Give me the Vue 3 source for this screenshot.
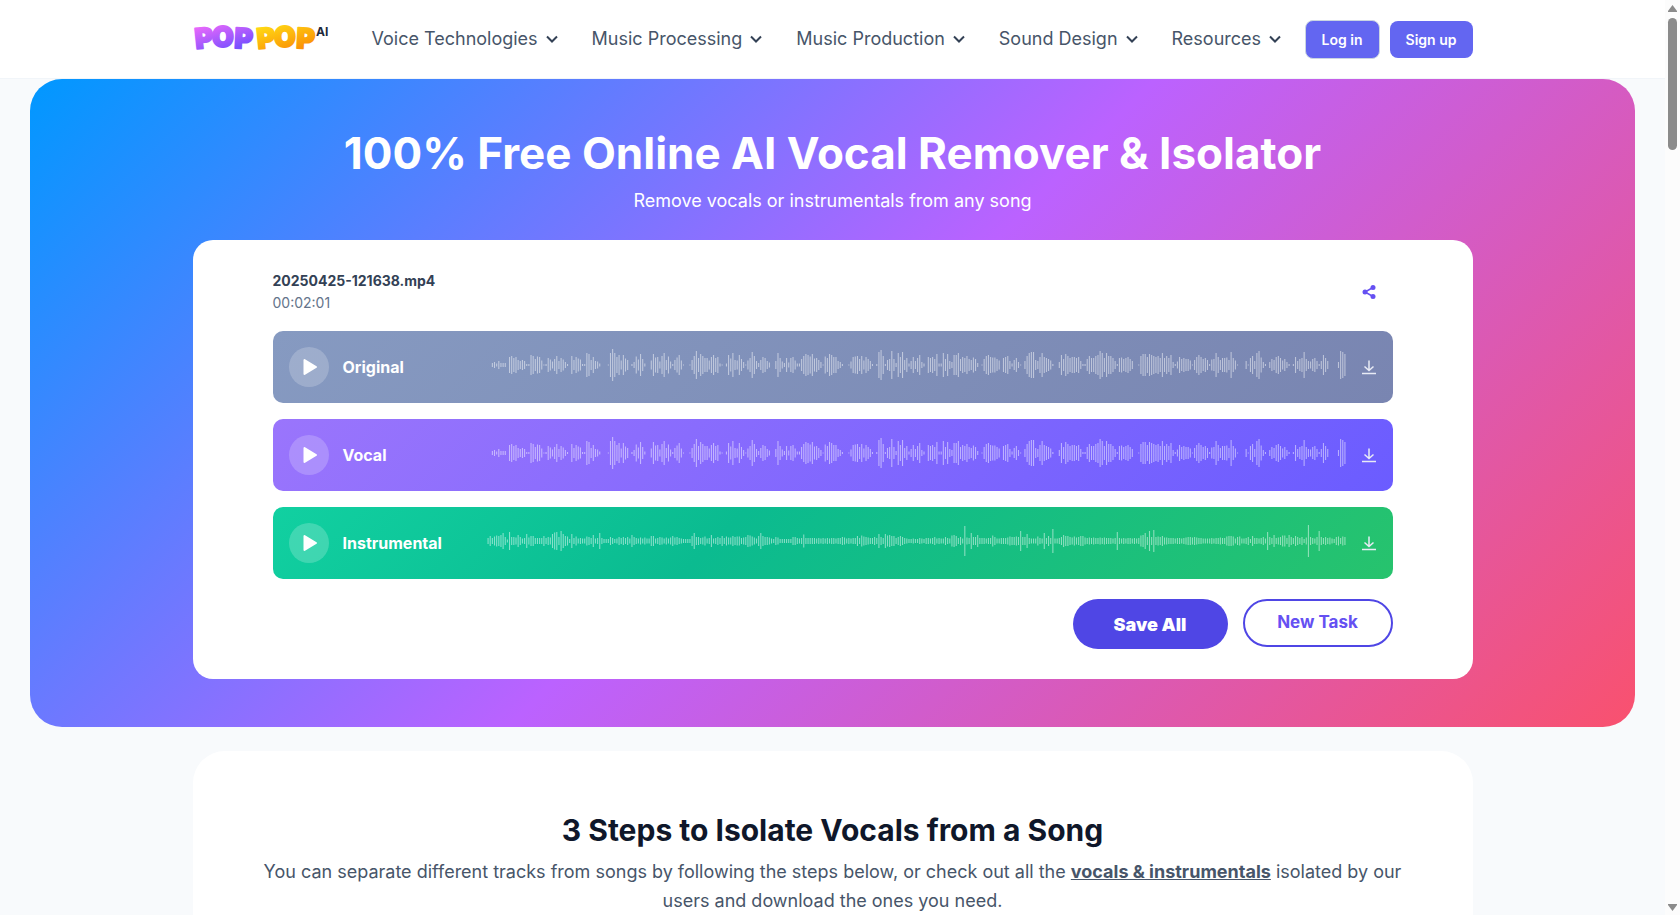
<script setup>
import { ref } from 'vue';

const menus = ref(['Voice Technologies', 'Music Processing', 'Music Production', 'Sound Design', 'Resources']);

// peak heights, one per bar
const vocalPeaks = [
  0, 0, 4, 6, 3, 8, 4, 4, 4, 0, 16, 18, 14, 16, 10, 8, 10, 8, 2, 2,
  20, 18, 12, 17, 16, 9, 1, 2, 14, 11, 7, 12, 18, 8, 14, 11, 6, 2, 0, 18,
  10, 16, 13, 11, 2, 2, 24, 22, 10, 16, 8, 7, 3, 0, 0, 0, 1, 24, 32, 24,
  16, 20, 9, 20, 13, 10, 0, 2, 6, 17, 11, 22, 12, 3, 0, 0, 9, 22, 15, 16,
  7, 18, 24, 10, 17, 7, 2, 10, 15, 20, 9, 1, 0, 0, 1, 10, 18, 28, 14, 22,
  18, 14, 14, 9, 16, 20, 14, 16, 3, 1, 0, 3, 20, 13, 24, 10, 9, 20, 12, 6,
  1, 9, 14, 26, 18, 8, 4, 10, 16, 14, 8, 5, 0, 0, 8, 24, 14, 7, 4, 14,
  5, 14, 16, 9, 3, 3, 12, 18, 22, 20, 17, 22, 13, 14, 10, 6, 1, 17, 14, 22,
  20, 16, 16, 8, 6, 2, 0, 0, 1, 7, 16, 17, 18, 12, 18, 9, 16, 12, 8, 2,
  0, 2, 26, 30, 18, 2, 10, 12, 28, 12, 4, 24, 16, 26, 10, 14, 3, 8, 16, 8,
  14, 20, 6, 3, 0, 16, 14, 16, 12, 22, 3, 3, 24, 12, 22, 8, 6, 20,
  20, 24, 12, 16, 14, 18, 12, 10, 15, 12, 4, 0, 1, 12, 18, 20, 16, 15, 15, 12,
  9, 0, 14, 16, 18, 8, 3, 10, 14, 6, 1, 0, 8, 18, 24, 26, 26, 10, 8, 16,
  24, 16, 14, 12, 9, 2, 0, 0, 6, 20, 12, 22, 18, 14, 16, 16, 14, 16, 8, 2,
  2, 12, 18, 14, 14, 18, 20, 28, 24, 14, 24, 18, 18, 14, 8, 2, 14, 15, 12, 14,
  16, 12, 8, 0, 0, 1, 18, 22, 22, 16, 22, 20, 18, 16, 18, 14, 24, 14, 18, 14,
  20, 6, 2, 7, 16, 12, 14, 12, 12, 9, 1, 10, 16, 20, 16, 12, 14, 10, 2, 11,
  12, 24, 16, 10, 14, 14, 15, 10, 26, 14, 9, 1, 0, 0, 0, 8, 1, 14, 18, 8,
  24, 28, 15, 6, 2, 0, 6, 12, 10, 16, 18, 14, 9, 12, 6, 2, 0, 2, 16, 8,
  12, 14, 26, 12, 8, 7, 12, 14, 8, 2, 8, 20, 14, 8, 0, 0, 0, 0, 6, 28, 26, 22,
];

const instrumentalPeaks = [
  6, 10, 6, 9, 11, 10, 12, 16, 8, 3, 18, 8, 8, 7, 12, 8, 5, 6, 14, 7,
  10, 10, 6, 6, 6, 6, 10, 6, 8, 7, 14, 17, 18, 8, 20, 14, 10, 9, 4, 14,
  6, 9, 5, 6, 5, 5, 9, 8, 6, 12, 5, 6, 16, 6, 4, 4, 4, 8, 6, 4,
  5, 8, 6, 8, 6, 8, 5, 12, 8, 6, 5, 7, 5, 7, 5, 5, 10, 10, 5, 6,
  8, 7, 5, 7, 5, 7, 10, 7, 8, 6, 5, 4, 4, 4, 4, 10, 16, 8, 8, 6,
  7, 9, 5, 6, 12, 5, 6, 8, 6, 10, 6, 9, 7, 7, 10, 8, 9, 9, 6, 7,
  8, 12, 11, 9, 7, 5, 10, 16, 10, 8, 8, 7, 5, 4, 8, 7, 4, 4, 4, 4,
  4, 4, 8, 8, 6, 5, 6, 13, 6, 6, 6, 6, 6, 5, 6, 5, 6, 5, 6, 5,
  6, 6, 5, 6, 6, 8, 7, 5, 6, 5, 6, 6, 10, 6, 11, 9, 8, 7, 6, 6,
  8, 6, 14, 8, 6, 14, 11, 12, 10, 10, 6, 8, 10, 8, 6, 5, 4, 4, 5, 4,
  4, 6, 5, 4, 6, 6, 5, 6, 8, 5, 6, 5, 5, 8, 6, 5, 11,
  12, 10, 6, 8, 5, 30, 7, 6, 16, 8, 8, 12, 6, 6, 6, 5, 6, 6, 11, 8,
  5, 5, 6, 6, 6, 7, 9, 8, 8, 9, 8, 20, 8, 8, 14, 6, 5, 5, 5, 9,
  6, 5, 16, 6, 10, 6, 24, 5, 5, 6, 8, 12, 10, 10, 8, 7, 9, 7, 8, 10,
  10, 7, 6, 7, 6, 7, 6, 6, 7, 6, 7, 6, 6, 6, 5, 6, 18, 6, 5, 6,
  5, 6, 6, 5, 6, 5, 6, 11, 12, 16, 8, 20, 8, 22, 8, 9, 8, 10, 7, 7,
  6, 6, 6, 5, 6, 6, 5, 6, 7, 8, 8, 7, 8, 7, 6, 6, 5, 5, 5, 5,
  6, 5, 6, 6, 7, 6, 6, 9, 10, 10, 9, 5, 8, 9, 5, 5, 6, 8, 4, 10,
  6, 6, 5, 6, 8, 5, 18, 8, 6, 12, 6, 7, 8, 11, 11, 6, 12, 8, 6, 10,
  8, 6, 8, 4, 7, 32, 8, 6, 5, 8, 20, 8, 6, 8, 6, 7, 5, 4, 8, 9, 6, 9, 8,
];

const tracks = ref([
  { name: 'Original', theme: 'original', peaks: vocalPeaks },
  { name: 'Vocal', theme: 'vocal', peaks: vocalPeaks },
  { name: 'Instrumental', theme: 'instrumental', peaks: instrumentalPeaks },
]);

const wavePath = (peaks) =>
  peaks.map((h, i) => (h ? `M${i * 2 + 1} ${18 - h / 2}v${h}` : '')).join('');
</script>
<template>
<div class="window">
  <div class="page">
    <header class="header">
      <div class="header-inner">
        <a href="#" class="logo" aria-label="POP POP AI">
          <svg width="138" height="36" viewBox="0 0 138 36">
            <defs>
              <linearGradient id="logoPurple" x1="0" y1="0" x2="0.5" y2="1">
                <stop offset="0.2" stop-color="#e668fb" />
                <stop offset="0.9" stop-color="#7a50ff" />
              </linearGradient>
              <linearGradient id="logoYellow" x1="0" y1="0" x2="0.5" y2="1">
                <stop offset="0.2" stop-color="#ffd814" />
                <stop offset="0.9" stop-color="#fb9406" />
              </linearGradient>
            </defs>
            <g class="logo-word" fill="url(#logoPurple)" stroke="url(#logoPurple)">
              <text x="3 19 41" y="28 26 27" rotate="-6 0 3">POP</text>
            </g>
            <g class="logo-word" fill="url(#logoYellow)" stroke="url(#logoYellow)">
              <text x="65 81 103" y="28 26 27" rotate="-6 0 3">POP</text>
            </g>
            <text class="logo-ai" x="123" y="15">AI</text>
          </svg>
        </a>
        <nav class="nav">
          <a v-for="menu in menus" :key="menu" href="#" class="nav-link">
            {{ menu }}
            <svg width="12" height="8" viewBox="0 0 12 8"><path d="M1 1.500 6 6.500l5-5" /></svg>
          </a>
        </nav>
        <div class="account">
          <button type="button" class="account-btn login">Log in</button>
          <button type="button" class="account-btn">Sign up</button>
        </div>
      </div>
    </header>

    <main>
      <section class="hero">
        <h1>100% Free Online AI Vocal Remover &amp; Isolator</h1>
        <p class="hero-sub">Remove vocals or instrumentals from any song</p>
        <div class="player">
          <div class="file">
            <div>
              <div class="file-name">20250425-121638.mp4</div>
              <div class="file-time">00:02:01</div>
            </div>
            <button type="button" class="icon-btn share" aria-label="Share">
              <svg width="16" height="16" viewBox="0 0 16 16">
                <path d="M12 3.500 4 8l8 4.500" fill="none" stroke="currentColor" stroke-width="1.500" />
                <circle cx="4" cy="8" r="2.500" fill="currentColor" />
                <circle cx="12" cy="3.500" r="2.500" fill="currentColor" />
                <circle cx="12" cy="12.500" r="2.500" fill="currentColor" />
              </svg>
            </button>
          </div>

          <div v-for="track in tracks" :key="track.name" class="track" :class="track.theme">
            <button type="button" class="play" :aria-label="'Play ' + track.name">
              <svg width="16" height="18" viewBox="0 0 16 18">
                <path d="M3.500 2v14L15 9z" />
              </svg>
            </button>
            <span class="track-name">{{ track.name }}</span>
            <svg class="wave" viewBox="0 0 800 36" preserveAspectRatio="none">
              <path :d="wavePath(track.peaks)" />
            </svg>
            <button type="button" class="icon-btn" :aria-label="'Download ' + track.name">
              <svg width="16" height="16" viewBox="0 0 16 16">
                <path d="M8 1.500v10M3.500 7.500 8 11.500l4.500-4M1 14.500h14" fill="none" stroke="currentColor" stroke-width="1.500" />
              </svg>
            </button>
          </div>

          <div class="actions">
            <button type="button" class="save">Save All</button>
            <button type="button" class="new-task">New Task</button>
          </div>
        </div>
      </section>

      <section class="steps">
        <h2>3 Steps to Isolate Vocals from a Song</h2>
        <p>
          You can separate different tracks from songs by following the steps below, or check out all the
          <a href="#">vocals &amp; instrumentals</a> isolated by our users and download the ones you need.
        </p>
      </section>
    </main>
  </div>

  <div class="scrollbar" aria-hidden="true">
    <svg width="9" height="7" viewBox="0 0 9 7"><path d="M4.500 0 9 6v1H0V6z" /></svg>
    <div class="thumb"></div>
    <svg width="9" height="7" viewBox="0 0 9 7"><path d="M4.500 7 9 1V0H0v1z" /></svg>
  </div>
</div>
</template>
<style>
body {
  margin: 0;
  background: #f8fafc;
}
</style>
<style scoped>
.window {
  display: flex;
  height: 100vh;
  overflow: hidden;
  font-family: Inter, "Liberation Sans", sans-serif;
  color: #475569;
}
.page {
  flex: 1;
  min-width: 0;
}
button {
  font-family: inherit;
  border: 0;
  padding: 0;
  cursor: pointer;
}
svg {
  display: block;
}
.header {
  background: #fff;
  border-bottom: 1px solid #f1f5f9;
}
.header-inner {
  display: flex;
  align-items: center;
  max-width: 1280px;
  height: 78px;
  margin: 0 auto;
}
.logo-word {
  font-size: 28px;
  font-weight: 900;
  stroke-width: 2px;
  stroke-linejoin: round;
}
.logo-ai {
  font-size: 12px;
  font-weight: 700;
  fill: #1e293b;
}
.nav {
  display: flex;
  gap: 34px;
  margin-left: 41px;
}
.nav-link {
  display: flex;
  align-items: center;
  gap: 8px;
  font-size: 18px;
  line-height: 28px;
  color: #475569;
  text-decoration: none;
  white-space: nowrap;
}
.nav-link path {
  fill: none;
  stroke: #334155;
  stroke-width: 2px;
}
.account {
  display: flex;
  align-items: center;
  gap: 10px;
  margin-left: auto;
}
.account-btn {
  box-sizing: border-box;
  height: 37px;
  padding: 0 16px;
  border-radius: 8px;
  background: #6366f1;
  color: #fff;
  font-size: 14px;
  font-weight: 600;
}
.login {
  height: 39px;
  border: 1px solid #cbd5e1;
}
.hero {
  margin: 0 30px;
  padding: 48px 0;
  border-radius: 32px;
  background: linear-gradient(135deg, #0098ff 0%, #bb62ff 50%, #f9516e 100%);
  color: #fff;
  text-align: center;
}
h1 {
  margin: 0;
  font-size: 44px;
  line-height: 52px;
  font-weight: 700;
}
.hero-sub {
  margin: 8px 0 25px;
  font-size: 18px;
  line-height: 28px;
}
.player {
  box-sizing: border-box;
  max-width: 1280px;
  margin: 0 auto;
  padding: 30px 80px;
  border-radius: 20px;
  background: #fff;
  text-align: left;
}
.file {
  display: flex;
  align-items: center;
  justify-content: space-between;
  padding-right: 16px;
  margin-bottom: 17px;
  font-size: 14px;
  line-height: 22px;
  color: #64748b;
}
.file-name {
  font-weight: 700;
  color: #334155;
}
.icon-btn {
  background: none;
  color: #e8ebf5;
}
.share {
  color: #6550f2;
}
.track {
  display: flex;
  align-items: center;
  height: 72px;
  padding: 0 16px;
  margin-bottom: 16px;
  border-radius: 10px;
}
.original {
  background: linear-gradient(135deg, #869ac1, #7985b1);
}
.vocal {
  background: linear-gradient(135deg, #9a75fc, #6b5cff);
}
.instrumental {
  background: linear-gradient(135deg, #11d0a1, #0bbb90 40%, #27c36d);
}
.play {
  display: grid;
  place-items: center;
  width: 40px;
  height: 40px;
  border-radius: 50%;
  background: rgba(255, 255, 255, 0.2);
}
.play path {
  fill: #fff;
  stroke: #fff;
  stroke-width: 2px;
  stroke-linejoin: round;
}
.track-name {
  width: 144px;
  margin-left: 14px;
  font-size: 16px;
  font-weight: 700;
  color: #fff;
}
.wave {
  flex: 1;
  min-width: 0;
  height: 36px;
  margin-right: 15px;
  margin-bottom: 4px;
}
.wave path {
  stroke: #fff;
  stroke-opacity: 0.5;
}
.actions {
  display: flex;
  align-items: flex-start;
  justify-content: flex-end;
  gap: 15px;
  margin-top: 20px;
}
.save {
  width: 155px;
  height: 50px;
  border-radius: 25px;
  background: #4f46e5;
  color: #fff;
  font-size: 18px;
  font-weight: 900;
}
.new-task {
  width: 150px;
  height: 48px;
  padding-bottom: 2px;
  border: 2px solid #4f46e5;
  border-radius: 25px;
  background: #fff;
  color: #6550f2;
  font-size: 17px;
  font-weight: 700;
}
.steps {
  box-sizing: border-box;
  max-width: 1280px;
  margin: 24px auto 0;
  padding: 60px 64px;
  border-radius: 32px;
  background: #fff;
  text-align: center;
}
h2 {
  margin: 0 0 8px;
  font-size: 30px;
  line-height: 38px;
  font-weight: 700;
  color: #0f172a;
}
.steps p {
  margin: 0;
  font-size: 18px;
  line-height: 29px;
}
.steps a {
  font-weight: 700;
  color: #475569;
}
.scrollbar {
  display: flex;
  flex-direction: column;
  align-items: center;
  box-sizing: border-box;
  width: 15px;
  padding: 5px 0 4px;
  background: #fcfcfc;
}
.scrollbar path {
  fill: #8b8b8b;
}
.thumb {
  width: 9px;
  height: 132px;
  margin: 6px 0 auto;
  border-radius: 5px;
  background: #8b8b8b;
}
</style>
